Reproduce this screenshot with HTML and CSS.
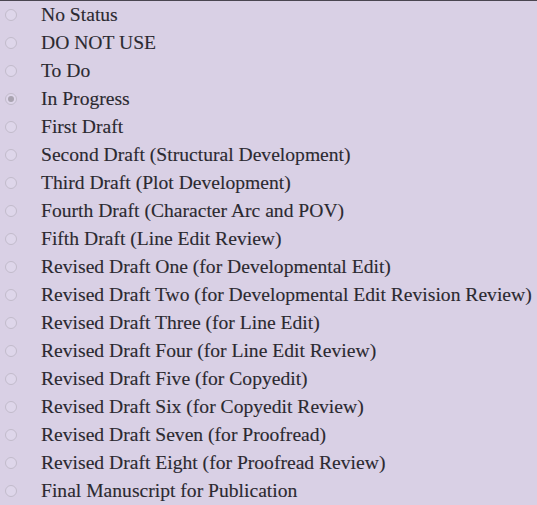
FILE: index.html
```html
<!DOCTYPE html>
<html>
<head>
<meta charset="utf-8">
<link rel="stylesheet" href="styles.css">
</head>
<body>
<ul class="status-list">
  <li class="status-item"><span class="radio"></span><span class="label">No Status</span></li>
  <li class="status-item"><span class="radio"></span><span class="label">DO NOT USE</span></li>
  <li class="status-item"><span class="radio"></span><span class="label">To Do</span></li>
  <li class="status-item"><span class="radio checked"></span><span class="label">In Progress</span></li>
  <li class="status-item"><span class="radio"></span><span class="label">First Draft</span></li>
  <li class="status-item"><span class="radio"></span><span class="label">Second Draft (Structural Development)</span></li>
  <li class="status-item"><span class="radio"></span><span class="label">Third Draft (Plot Development)</span></li>
  <li class="status-item"><span class="radio"></span><span class="label">Fourth Draft (Character Arc and POV)</span></li>
  <li class="status-item"><span class="radio"></span><span class="label">Fifth Draft (Line Edit Review)</span></li>
  <li class="status-item"><span class="radio"></span><span class="label">Revised Draft One (for Developmental Edit)</span></li>
  <li class="status-item"><span class="radio"></span><span class="label">Revised Draft Two (for Developmental Edit Revision Review)</span></li>
  <li class="status-item"><span class="radio"></span><span class="label">Revised Draft Three (for Line Edit)</span></li>
  <li class="status-item"><span class="radio"></span><span class="label">Revised Draft Four (for Line Edit Review)</span></li>
  <li class="status-item"><span class="radio"></span><span class="label">Revised Draft Five (for Copyedit)</span></li>
  <li class="status-item"><span class="radio"></span><span class="label">Revised Draft Six (for Copyedit Review)</span></li>
  <li class="status-item"><span class="radio"></span><span class="label">Revised Draft Seven (for Proofread)</span></li>
  <li class="status-item"><span class="radio"></span><span class="label">Revised Draft Eight (for Proofread Review)</span></li>
  <li class="status-item"><span class="radio"></span><span class="label">Final Manuscript for Publication</span></li>
</ul>
</body>
</html>
```
FILE: styles.css
```css
html, body {
  margin: 0;
  padding: 0;
  background: #d9d0e5;
  height: 100%;
}
body {
  border-top: 1px solid #4a4650;
  font-family: "Liberation Serif", serif;
  color: #2b2930;
  overflow: hidden;
}
.status-list {
  list-style: none;
  margin: 0;
  padding: 0;
}
.status-item {
  display: flex;
  align-items: center;
  height: 28px;
}
.radio {
  box-sizing: border-box;
  width: 12px;
  height: 12px;
  margin-left: 5px;
  margin-right: 24px;
  border: 1px solid #c2bbcb;
  border-radius: 50%;
  background: #ded6ea;
  display: flex;
  align-items: center;
  justify-content: center;
  flex: none;
}
.radio.checked::after {
  content: "";
  width: 6px;
  height: 6px;
  border-radius: 50%;
  background: #a9a3b0;
}
.label {
  font-size: 19.6px;
  white-space: nowrap;
  -webkit-text-stroke: 0.12px #2b2930;
}
```
